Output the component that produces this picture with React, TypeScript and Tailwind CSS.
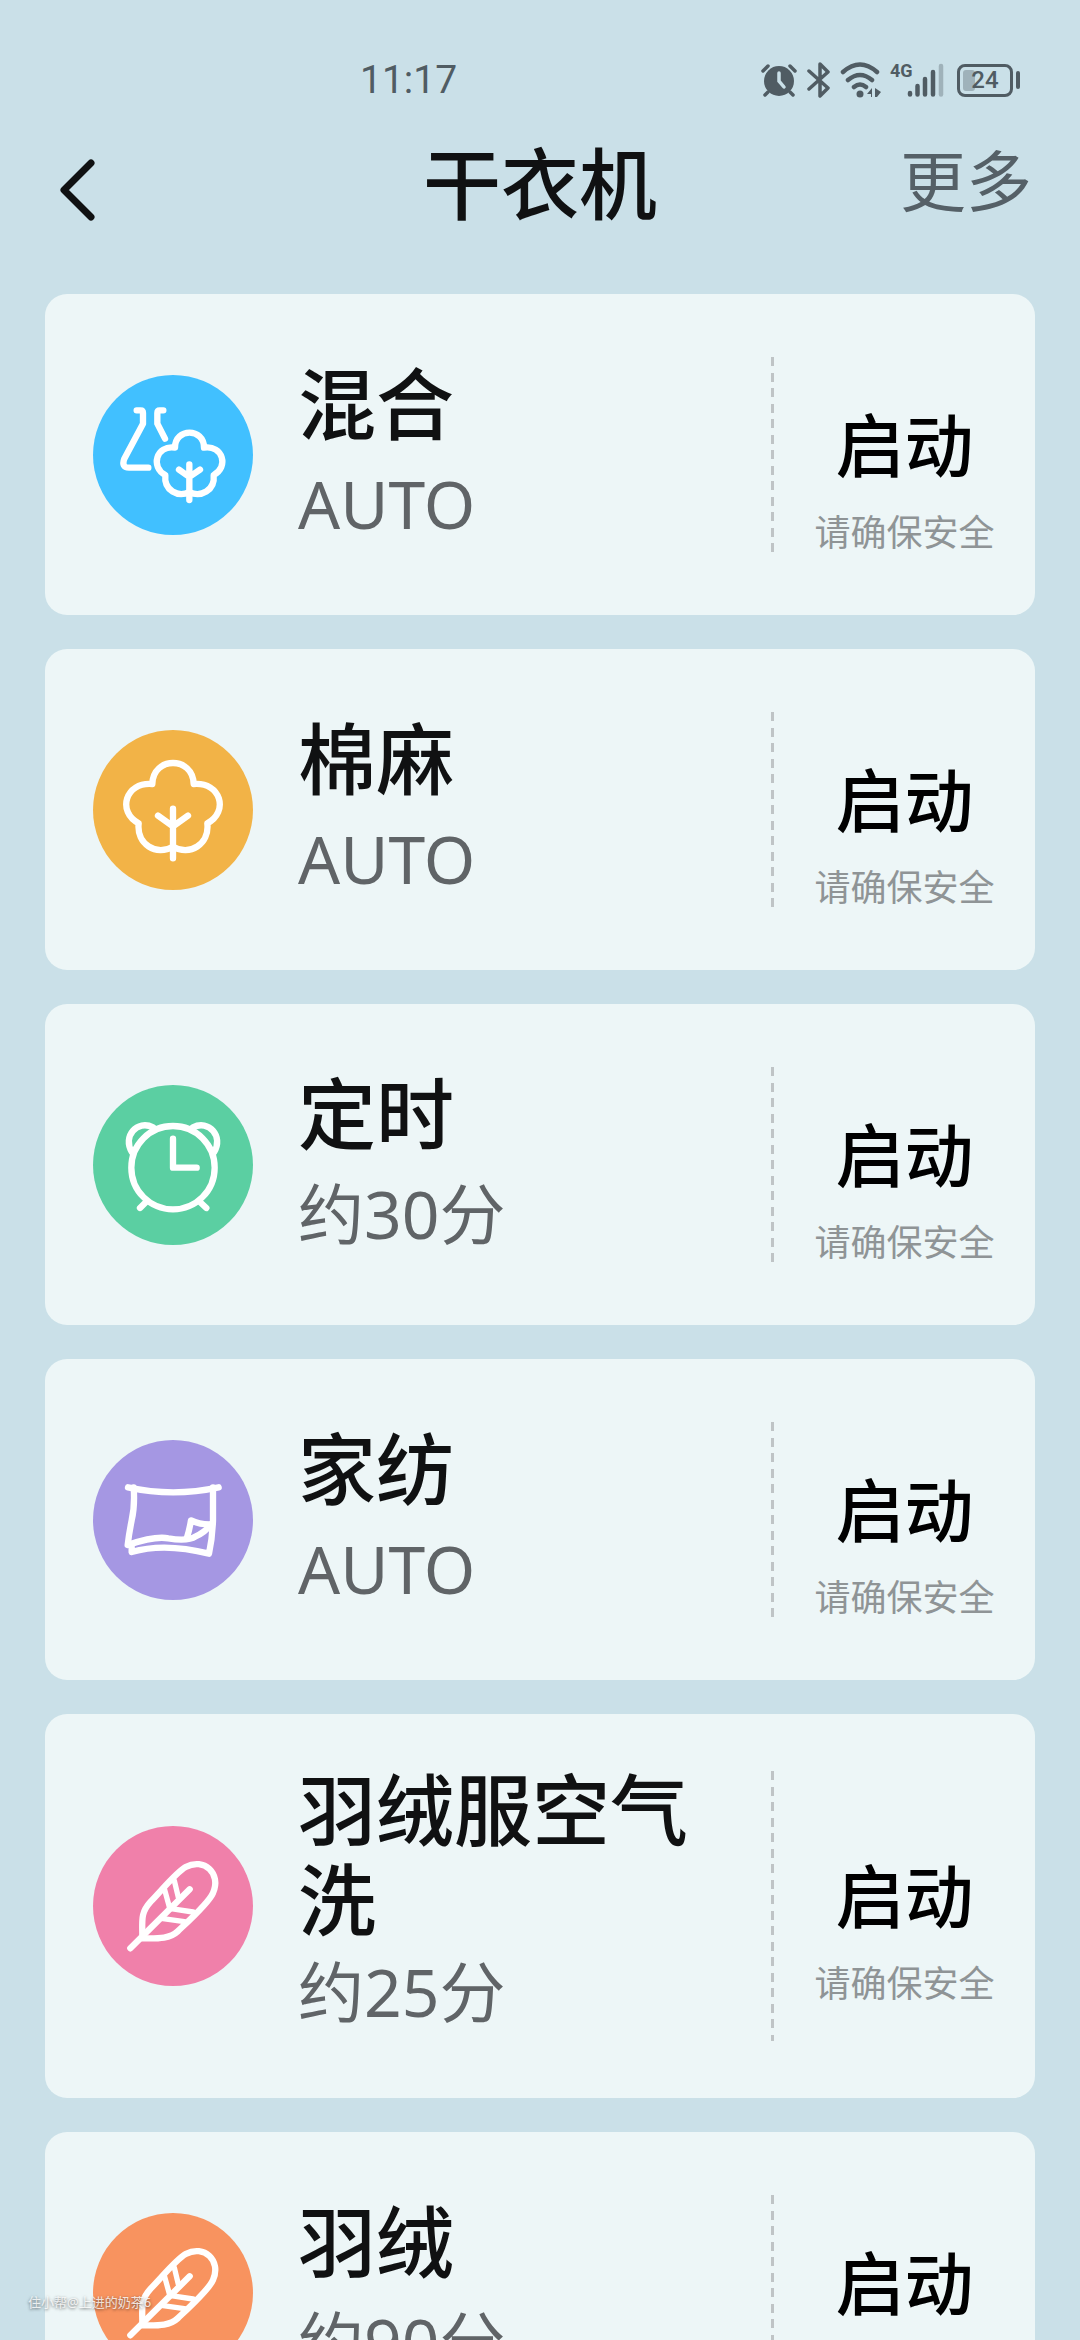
import type { ReactNode } from "react";

type Program = {
  name: string;
  detail: string;
  color: string;
  icon: ReactNode;
};

function ProgramIcon({
  viewBox,
  children,
}: {
  viewBox: string;
  children: ReactNode;
}) {
  return (
    <svg
      viewBox={viewBox}
      className="h-full w-full"
      fill="none"
      stroke="white"
      strokeWidth={19}
      strokeLinecap="round"
      strokeLinejoin="round"
      aria-hidden="true"
    >
      {children}
    </svg>
  );
}

function MixedIcon() {
  return (
    <ProgramIcon viewBox="38 43 480 480">
      <path d="M169 149H181Q188 149 188 157V189L132 294Q122 321 146 321H204" />
      <path d="M249 149H238Q231 149 231 157V189L254 234" />
      <path d="M284 261C284 201 371 201 371 261C428 252 446 320 400 343C405 390 360 411 327 394C294 411 250 390 255 343C210 320 227 252 284 261Z" />
      <path d="M327 311V418M296 327L327 349L359 327" />
    </ProgramIcon>
  );
}

function CottonIcon() {
  return (
    <ProgramIcon viewBox="38 45 480 480">
      <path d="M216 207C218 123 338 123 340 207C422 200 446 291 381 325C388 388 328 424 278 395C228 424 168 388 175 325C110 291 134 200 216 207Z" />
      <path d="M278 281V430M233 302L278 334L323 302" />
    </ProgramIcon>
  );
}

function TimerIcon() {
  return (
    <ProgramIcon viewBox="38 42 480 480">
      <circle cx="278" cy="290" r="125" />
      <path d="M155 244C125 196 171 145 218 169M401 244C431 196 385 145 338 169" />
      <path d="M278 203V290H349" />
      <path d="M197 393L179 411M359 393L378 411" />
    </ProgramIcon>
  );
}

function HomeTextileIcon() {
  return (
    <ProgramIcon viewBox="38 47 480 480">
      <path d="M143 189Q278 219 415 189" />
      <path d="M160 189Q164 246 154 288Q146 328 142 362Q225 334 264 342Q322 352 346 336Q374 324 392 300" />
      <path d="M398 189V288Q396 342 386 388Q252 354 154 383L154 368" />
      <path d="M319 343Q328 314 332 288Q355 300 388 300" />
    </ProgramIcon>
  );
}

function FeatherIcon() {
  return (
    <ProgramIcon viewBox="38 38 480 480">
      <path d="M186 371C186 320 180 299 211 265C252 222 289 176 316 161C371 132 424 180 398 239C386 268 326 322 292 354C266 378 230 375 186 375" />
      <path d="M150 405L328 228" />
      <path d="M251 222L268 284M282 202L294 252" strokeWidth={16} />
      <path d="M272 286L338 296M248 316L312 325" strokeWidth={16} />
    </ProgramIcon>
  );
}

const programs: Program[] = [
  { name: "混合", detail: "AUTO", color: "bg-[#41c0ff]", icon: <MixedIcon /> },
  { name: "棉麻", detail: "AUTO", color: "bg-[#f2b347]", icon: <CottonIcon /> },
  { name: "定时", detail: "约30分", color: "bg-[#5bcfa2]", icon: <TimerIcon /> },
  {
    name: "家纺",
    detail: "AUTO",
    color: "bg-[#a597e3]",
    icon: <HomeTextileIcon />,
  },
  {
    name: "羽绒服空气洗",
    detail: "约25分",
    color: "bg-[#f080aa]",
    icon: <FeatherIcon />,
  },
  { name: "羽绒", detail: "约90分", color: "bg-[#f8935f]", icon: <FeatherIcon /> },
];

function StatusBar() {
  return (
    <div className="grid h-12 shrink-0 grid-cols-3 items-center text-[#505c63]">
      <span className="col-start-2 font-[Roboto] text-[39px] leading-[48px]">
        11:17
      </span>
      <div className="flex items-center justify-end pr-[60px]">
        {/* alarm */}
        <svg viewBox="0 0 36 36" className="mr-[10px] h-9 w-9" aria-hidden="true">
          <circle cx="18" cy="19" r="15" fill="currentColor" />
          <path
            d="M2 9L7 4M34 9L29 4M7 30L4 33M29 30L32 33"
            stroke="currentColor"
            strokeWidth="3.5"
            strokeLinecap="round"
          />
          <path
            d="M18 11V19L23 25"
            fill="none"
            stroke="#cae0e8"
            strokeWidth="3.5"
            strokeLinecap="round"
          />
        </svg>
        {/* bluetooth */}
        <svg viewBox="0 0 24 36" className="mr-[9px] h-9 w-6" aria-hidden="true">
          <path
            d="M2 9L21 26L13 34V2L21 10L2 27"
            fill="none"
            stroke="currentColor"
            strokeWidth="3.5"
            strokeLinecap="round"
            strokeLinejoin="round"
          />
        </svg>
        {/* wifi */}
        <svg viewBox="0 0 42 36" className="mr-2 h-9 w-[42px]" aria-hidden="true">
          <path
            d="M3 10Q20 -5 37 10M8 18Q20 8 32 18M14 25Q20 20 26 25"
            fill="none"
            stroke="currentColor"
            strokeWidth="4.5"
            strokeLinecap="round"
          />
          <circle cx="20" cy="32" r="3.5" fill="currentColor" />
          <path d="M32 26V35H31V32H27ZM35 26L41 30L37 35H35Z" fill="currentColor" />
        </svg>
        <div className="relative mr-[12px]">
          <span className="absolute left-0 top-0 font-[Roboto] text-[18px] font-bold leading-[18px]">
            4G
          </span>
          <svg viewBox="0 0 55 36" className="h-9 w-[55px]" aria-hidden="true">
            <path
              d="M20 31V32.5M27.5 24V32.5M35 17V32.5M43 10V32.5"
              stroke="currentColor"
              strokeWidth="4.5"
              strokeLinecap="round"
            />
            <path
              d="M51 4V32.5"
              stroke="currentColor"
              strokeOpacity="0.35"
              strokeWidth="4.5"
              strokeLinecap="round"
            />
          </svg>
        </div>
        <div className="flex items-center gap-[3px]">
          <div className="relative h-[33px] w-[56px] rounded-[8px] border-3 border-current">
            <div className="absolute left-[3px] top-[3px] h-[21px] w-[12px] rounded-[3px] bg-current opacity-35" />
            <span className="relative block text-center font-[Roboto] text-[24px] font-medium leading-[27px]">
              24
            </span>
          </div>
          <div className="h-[18px] w-1 rounded-full bg-current" />
        </div>
      </div>
    </div>
  );
}

function ProgramCard({ name, detail, color, icon }: Program) {
  return (
    <li className="flex min-h-[321px] shrink-0 items-center rounded-[22px] bg-[#edf6f7] py-[57px] pl-12">
      <div className="flex min-h-[195px] w-full">
        <div className={`h-40 w-40 shrink-0 self-center rounded-full ${color}`}>
          {icon}
        </div>
        <div className="-mt-[6px] ml-[45px] flex flex-1 flex-col pb-1 pr-10">
          <h2 className="flex grow items-center text-[78px] font-medium leading-[90px] text-[#101112]">
            {name}
          </h2>
          <p className="text-[66px] leading-[92px] text-[#606467]">{detail}</p>
        </div>
        <div className="w-[3px] shrink-0 bg-[repeating-linear-gradient(to_bottom,#bfc4c6_0_9px,transparent_9px_16px,#bfc4c6_16px_25px,transparent_25px_31px)]" />
        <button
          type="button"
          className="flex w-[261px] shrink-0 flex-col items-center justify-center gap-7 pt-12"
        >
          <span className="text-[69px] font-medium leading-[80px] text-black">
            启动
          </span>
          <span className="text-[36px] leading-[40px] text-[#8f9496]">
            请确保安全
          </span>
        </button>
      </div>
    </li>
  );
}

export default function App() {
  return (
    <div className="relative flex h-screen flex-col overflow-hidden bg-[#cae0e8] pt-14 font-['Noto_Sans','Noto_Sans_CJK_SC',sans-serif]">
      <StatusBar />

      <header className="grid h-40 shrink-0 grid-cols-3 items-center">
        <button type="button" aria-label="返回" className="ml-[54px] w-12">
          <svg viewBox="0 0 48 80" className="h-20 w-12" aria-hidden="true">
            <path
              d="M37 19L10 46L37 73"
              fill="none"
              stroke="#101112"
              strokeWidth="7"
              strokeLinecap="round"
              strokeLinejoin="round"
            />
          </svg>
        </button>
        <h1 className="text-center text-[78px] font-medium leading-[90px] text-[#101112]">
          干衣机
        </h1>
        <button
          type="button"
          className="mr-12 justify-self-end pb-2 text-[66px] leading-[90px] text-[#556067]"
        >
          更多
        </button>
      </header>

      <ul className="flex flex-col gap-[34px] px-[45px] pt-[30px]">
        {programs.map((program) => (
          <ProgramCard key={program.name} {...program} />
        ))}
      </ul>

      <span className="absolute bottom-[28px] left-[28px] text-[13px] leading-5 text-white/80 [text-shadow:0_1px_3px_rgb(0_0_0/0.6)]">
        住小帮@上进的奶茶6
      </span>
    </div>
  );
}
